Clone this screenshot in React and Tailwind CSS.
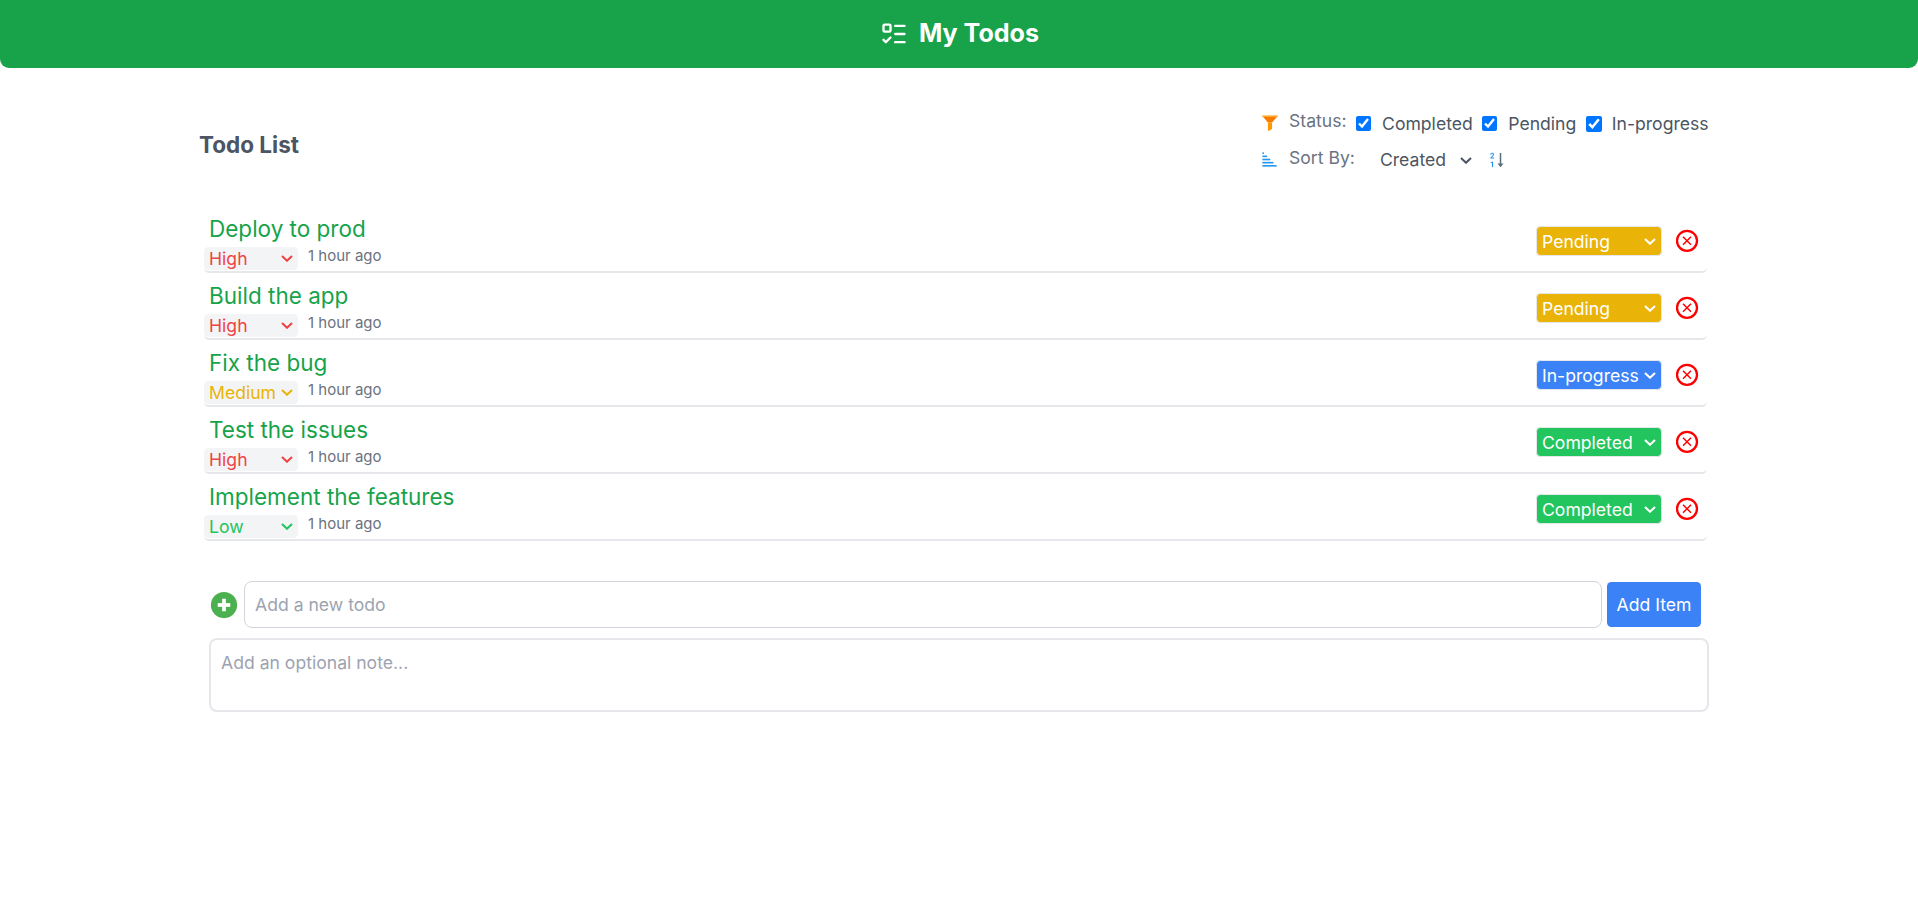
import { FcFilledFilter, FcGenericSortingAsc, FcNumericalSorting21, FcPlus } from "react-icons/fc";
import { ListTodo } from "lucide-react";

const todos = [
  { title: "Deploy to prod", priority: "High", status: "Pending" },
  { title: "Build the app", priority: "High", status: "Pending" },
  { title: "Fix the bug", priority: "Medium", status: "In-progress" },
  { title: "Test the issues", priority: "High", status: "Completed" },
  { title: "Implement the features", priority: "Low", status: "Completed" },
];

const priorityColor = {
  High: "text-[#ef4444]",
  Medium: "text-[#eab308]",
  Low: "text-[#22c55e]",
};

const statusColor = {
  Pending: "bg-[#eab308]",
  "In-progress": "bg-[#3b82f6]",
  Completed: "bg-[#22c55e]",
};

function CloseIcon() {
  return (
    <svg className="size-[23px]" viewBox="0 0 23 23" fill="none" stroke="#ff0000">
      <circle cx="11" cy="11.8" r="10" strokeWidth="2.3" />
      <path d="M7 7.8l8 8M15 7.8l-8 8" strokeWidth="1.5" />
    </svg>
  );
}

function Select({ value, options, className, selectClass, arrowClass = "mr-[5px]" }) {
  return (
    <div className={`grid grid-rows-1 items-center ${className}`}>
      <select
        defaultValue={value}
        className={`col-start-1 row-start-1 size-full appearance-none ${selectClass}`}
      >
        {options.map((option) => (
          <option key={option}>{option}</option>
        ))}
      </select>
      <svg
        className={`pointer-events-none col-start-1 row-start-1 h-[7px] w-[12px] justify-self-end ${arrowClass}`}
        viewBox="0 0 12 7"
        fill="none"
        stroke="currentColor"
        strokeWidth="2.1"
      >
        <path d="M1 1l5 4.7L11 1" />
      </svg>
    </div>
  );
}

function Check({ label, big }) {
  return (
    <label className="flex items-center">
      <input
        type="checkbox"
        defaultChecked
        className={big ? "mr-[10px] mb-px size-4" : "mr-[11px] mb-[2px] size-[15px]"}
      />
      {label}
    </label>
  );
}

function TodoRow({ todo }) {
  return (
    <li className="flex h-[67px] justify-between rounded-[5px] border-b-2 border-[#e5e7eb]">
      <div>
        <div className="h-[41px] pt-[7px] pl-[5px] text-[22.5px] leading-[32px] text-[#16a34a]">{todo.title}</div>
        <div className="flex">
          <Select
            value={todo.priority}
            options={["High", "Medium", "Low"]}
            className={`h-[23px] w-[94px] ${priorityColor[todo.priority]}`}
            selectClass="rounded-[4.4px] bg-[#f3f4f6] pl-[5px] leading-[23px]"
          />
          <span className="ml-[10px] text-[15px] leading-[17px] text-[#6b7280]">1 hour ago</span>
        </div>
      </div>
      <div className="flex items-start pt-[20px] pr-[8px]">
        <Select
          value={todo.status}
          options={["Pending", "In-progress", "Completed"]}
          className="h-[30px] w-[126px] text-white"
          selectClass={`rounded-[4.4px] border border-[#e5e7eb] pt-[2px] pr-[6px] pl-[5px] ${statusColor[todo.status]}`}
          arrowClass="mr-[6px]"
        />
        <button className="mt-[3px] ml-[14px]">
          <CloseIcon />
        </button>
      </div>
    </li>
  );
}

export default function App() {
  return (
    <div className="h-[905px] bg-white font-['Inter',sans-serif] text-[17.6px] leading-[26.4px] text-[#4b5563]">
      <header className="flex h-[68px] items-center justify-center gap-[11px] rounded-b-[9px] bg-[#18a34a] pl-px text-white">
        <ListTodo className="size-[28px]" strokeWidth={2} />
        <h1 className="pb-[2px] text-[25.1px] leading-[35px] font-bold">My Todos</h1>
      </header>
      <main className="pr-[209px] pl-[199px]">
        <div className="flex h-[138px] justify-between">
          <h2 className="pt-[61px] text-[22.5px] leading-[31px] font-bold">Todo List</h2>
          <div className="w-[449px] pt-[40px]">
            <div className="flex h-[36px]">
              <FcFilledFilter className="mt-[5px] size-[20px] shrink-0" />
              <span className="ml-[9px] text-[#6b7280]">Status:</span>
              <div className="mt-[2px] ml-[9.5px] flex h-[28px] gap-[9.5px] whitespace-nowrap">
                <Check label="Completed" />
                <Check label="Pending" />
                <Check label="In-progress" big />
              </div>
            </div>
            <div className="flex">
              <FcGenericSortingAsc className="mt-[6px] size-[19px]" />
              <span className="mt-px ml-[10px] text-[#6b7280]">Sort By:</span>
              <Select
                value="Created"
                options={["Created", "Priority"]}
                className="mt-[3px] ml-[21px] h-[27px] w-[101px]"
                selectClass="pl-[4px]"
              />
              <FcNumericalSorting21 className="mt-[7px] ml-[10px] size-[18px]" />
            </div>
          </div>
        </div>
        <ul className="mr-[2px] ml-[5px]">
          {todos.map((todo) => (
            <TodoRow key={todo.title} todo={todo} />
          ))}
        </ul>
        <div className="mt-[40px] ml-[10px] flex items-center">
          <FcPlus className="mr-[5px] size-[30px]" />
          <input
            placeholder="Add a new todo"
            className="h-[47px] w-[1358px] rounded-[8px] border border-[#d1d5db] px-[10px] placeholder:text-[#9ca3af]"
          />
          <button className="ml-[5px] h-[45px] w-[94px] rounded-[4.4px] bg-[#3b82f6] pt-px text-white">Add Item</button>
        </div>
        <textarea
          placeholder="Add an optional note..."
          className="mt-[10px] ml-[10px] block h-[74px] w-[1500px] resize-none rounded-[8px] border-2 border-[#e5e7eb] px-[10px] py-[10px] placeholder:text-[#9ca3af]"
        />
      </main>
    </div>
  );
}
